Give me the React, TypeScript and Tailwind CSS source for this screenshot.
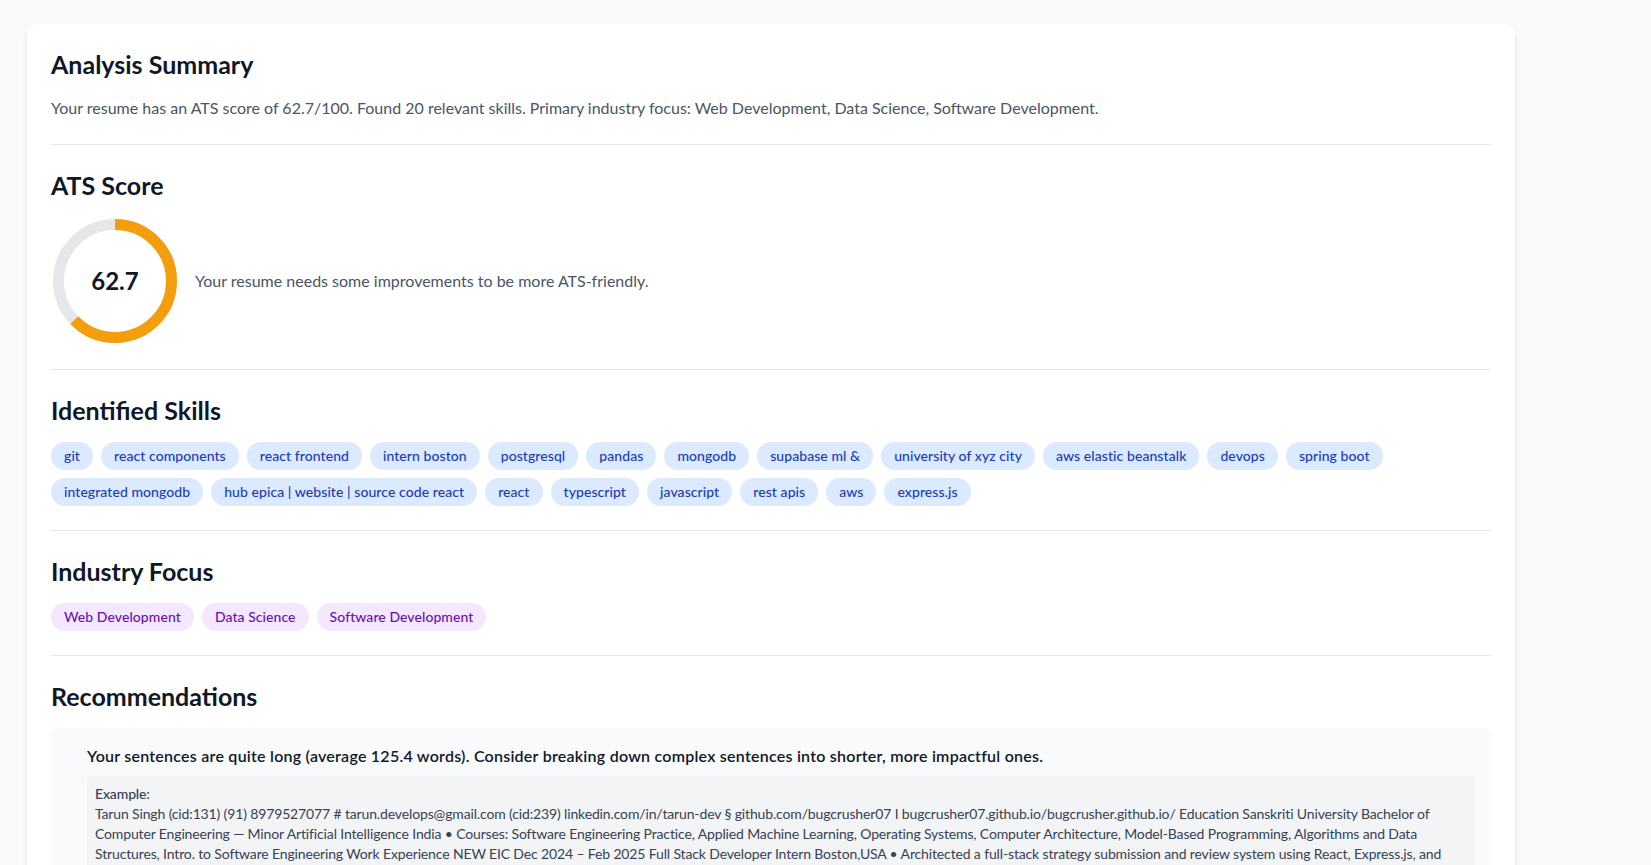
const skills = [
  "git",
  "react components",
  "react frontend",
  "intern boston",
  "postgresql",
  "pandas",
  "mongodb",
  "supabase ml &",
  "university of xyz city",
  "aws elastic beanstalk",
  "devops",
  "spring boot",
  "integrated mongodb",
  "hub epica | website | source code react",
  "react",
  "typescript",
  "javascript",
  "rest apis",
  "aws",
  "express.js",
];

const industries = ["Web Development", "Data Science", "Software Development"];

const exampleText =
  "Tarun Singh (cid:131) (91) 8979527077 # tarun.develops@gmail.com (cid:239) linkedin.com/in/tarun-dev § github.com/bugcrusher07 I bugcrusher07.github.io/bugcrusher.github.io/ Education Sanskriti University Bachelor of Computer Engineering — Minor Artificial Intelligence India • Courses: Software Engineering Practice, Applied Machine Learning, Operating Systems, Computer Architecture, Model-Based Programming, Algorithms and Data Structures, Intro. to Software Engineering Work Experience NEW EIC Dec 2024 – Feb 2025 Full Stack Developer Intern Boston,USA • Architected a full-stack strategy submission and review system using React, Express.js, and MongoDB, reducing manual review time for the strategy team • Built reusable React components and REST APIs consumed by internal dashboards • Deployed services on AWS Elastic Beanstalk with automated CI/CD pipelines";

/* ── Score ring ── */
function ScoreRing({ score }: { score: number }) {
  const r = 56.5;
  const c = 2 * Math.PI * r;
  return (
    <div className="relative w-32 h-32 shrink-0">
      <svg viewBox="0 0 128 128" className="w-32 h-32 -rotate-90">
        <circle cx="64" cy="64" r={r} fill="none" stroke="#e5e7eb" strokeWidth="11" />
        <circle
          cx="64"
          cy="64"
          r={r}
          fill="none"
          stroke="#f59e0b"
          strokeWidth="11"
          strokeDasharray={c}
          strokeDashoffset={c * (1 - score / 100)}
        />
      </svg>
      <div className="absolute inset-0 flex items-center justify-center text-2xl font-bold text-gray-900">
        {score}
      </div>
    </div>
  );
}

function Section({ title, children, last }: { title: string; children: React.ReactNode; last?: boolean }) {
  return (
    <div className={last ? "pt-6" : "py-6 border-b border-gray-200 first:pt-0"}>
      <h2 className="text-[25px] leading-8 font-bold text-gray-900 mb-4">{title}</h2>
      {children}
    </div>
  );
}

export default function App() {
  return (
    <div
      className="min-h-screen bg-[#f9fafb] pt-6 px-[27px]"
      style={{ fontFamily: '"Segoe UI", Lato, sans-serif' }}
    >
      <div className="w-[1488px] bg-white rounded-xl shadow-md p-6">
        <Section title="Analysis Summary">
          <p className="text-base text-gray-600">
            Your resume has an ATS score of 62.7/100. Found 20 relevant skills. Primary industry focus: Web
            Development, Data Science, Software Development.
          </p>
        </Section>

        <Section title="ATS Score">
          <div className="flex items-center gap-4">
            <ScoreRing score={62.7} />
            <p className="text-base text-gray-600">Your resume needs some improvements to be more ATS-friendly.</p>
          </div>
        </Section>

        <Section title="Identified Skills">
          <div className="flex flex-wrap gap-2">
            {skills.map((s) => (
              <span
                key={s}
                className="px-[13px] py-1 rounded-full bg-blue-100 text-blue-800 text-sm font-medium tracking-[0.005em]"
              >
                {s}
              </span>
            ))}
          </div>
        </Section>

        <Section title="Industry Focus">
          <div className="flex flex-wrap gap-2">
            {industries.map((s) => (
              <span
                key={s}
                className="px-[13px] py-1 rounded-full bg-purple-100 text-purple-800 text-sm font-medium tracking-[0.005em]"
              >
                {s}
              </span>
            ))}
          </div>
        </Section>

        <Section title="Recommendations" last>
          <div className="bg-gray-50 rounded-lg p-4">
            <div className="ml-5">
              <p className="text-base font-semibold text-gray-900 tracking-[0.015em]">
                Your sentences are quite long (average 125.4 words). Consider breaking down complex sentences into
                shorter, more impactful ones.
              </p>
              <div className="mt-2 bg-gray-100 rounded p-2 text-sm text-gray-700 tracking-[-0.01em]">
                <p className="font-medium">Example:</p>
                <p>{exampleText}</p>
              </div>
            </div>
          </div>
        </Section>
      </div>
    </div>
  );
}
